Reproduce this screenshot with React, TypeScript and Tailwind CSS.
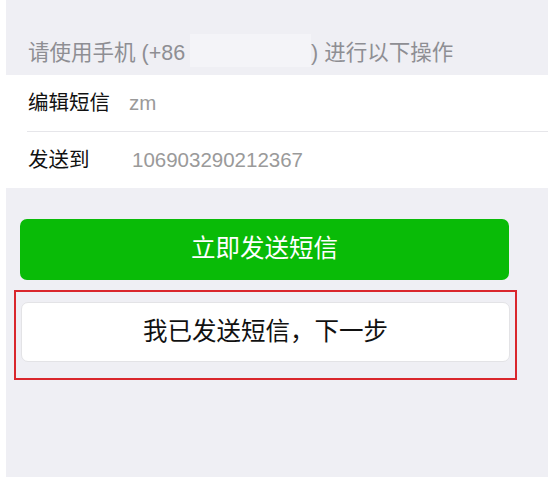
export default function App() {
  const font = { fontFamily: '"Liberation Sans", "Noto Sans CJK SC", sans-serif' };
  return (
    <div className="w-[548px] h-[477px] bg-white pl-[6px]" style={font}>
      <div className="h-full bg-[#efeff4] flex flex-col">
        <div className="h-[75px] flex items-start pt-[34px] pl-[22px] text-[21.5px] leading-[33px] text-[#8e8e93]">
          <span className="mt-[3px]">请使用手机 (+86</span>
          <span className="ml-[5px] w-[121px] h-[33px] bg-[#f4f4f8]" />
          <span className="mt-[3px]">) 进行以下操作</span>
        </div>
        <div className="bg-white">
          <div className="ml-[21px] h-[57px] flex items-center border-b border-[#e6e6ea]">
            <span className="w-[102px] pl-[1px] text-[20.5px] text-[#111]">编辑短信</span>
            <span className="text-[20.5px] text-[#9a9a9a]">zm</span>
          </div>
          <div className="ml-[21px] h-[56px] flex items-center">
            <span className="w-[105px] pl-[1px] text-[20.5px] text-[#111]">发送到</span>
            <span className="text-[20.5px] text-[#9a9a9a]">106903290212367</span>
          </div>
        </div>
        <div className="pt-[31px] pl-[14px] w-[503px]">
          <div className="h-[61px] bg-[#09bb07] rounded-[7px] flex items-center justify-center text-white text-[24.5px]">
            立即发送短信
          </div>
        </div>
        <div className="mt-[10px] ml-[8px] w-[503px] h-[90px] border-2 border-[#d9262c] pt-[10px] pl-[5px] pr-[5px]">
          <div className="h-[60px] bg-white border border-[#e3e3e6] rounded-[7px] flex items-center justify-center text-[24.5px] text-[#111]">
            我已发送短信，下一步
          </div>
        </div>
      </div>
    </div>
  );
}
